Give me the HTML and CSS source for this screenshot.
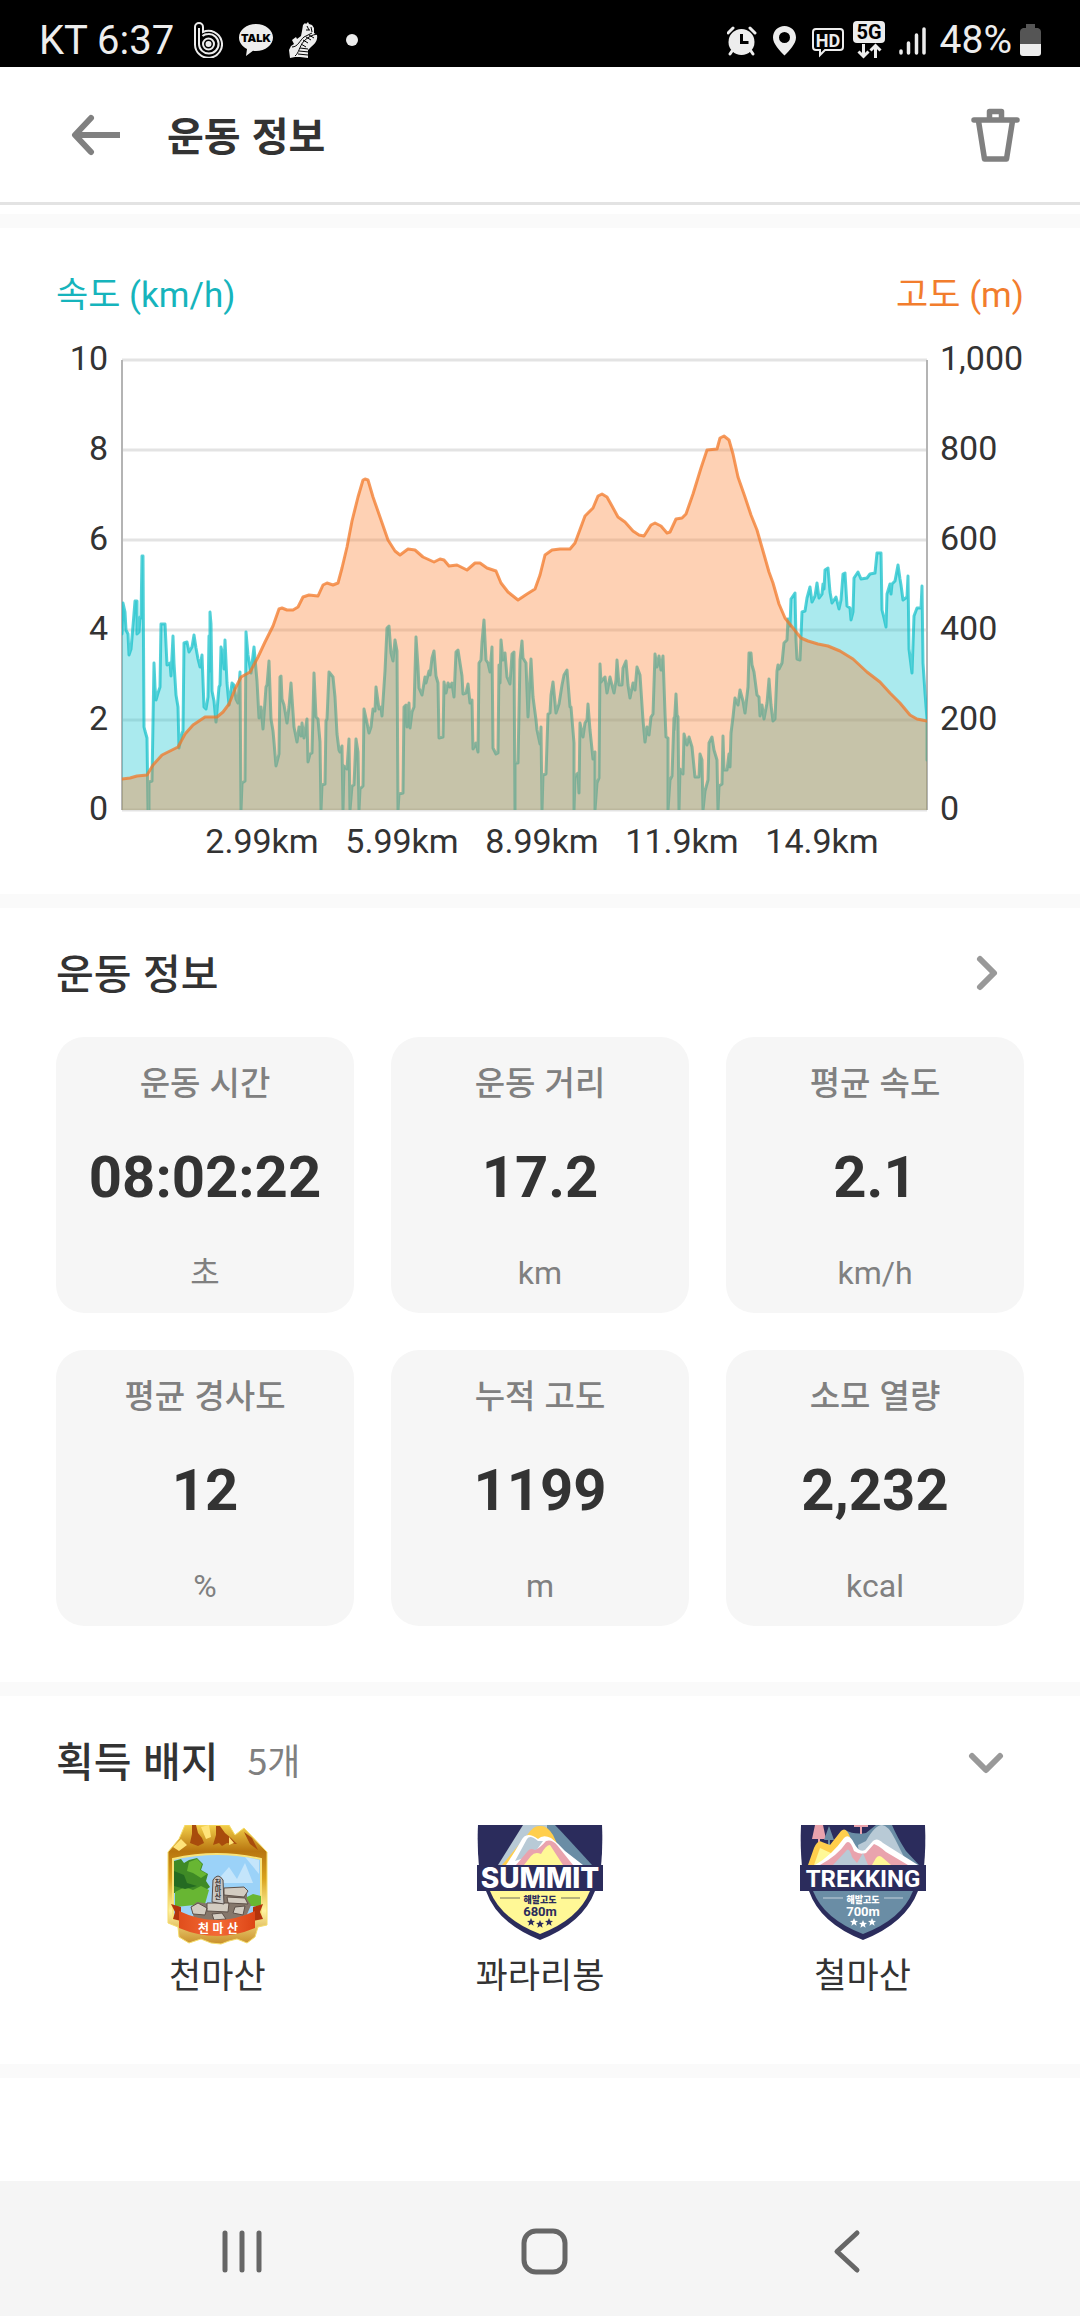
FILE: index.html
```html
<!DOCTYPE html>
<html lang="ko">
<head>
<meta charset="utf-8">
<meta name="viewport" content="width=device-width, initial-scale=1">
<title>운동 정보</title>
<link rel="stylesheet" href="styles.css">
</head>
<body>
<div class="status-bar">
  <div class="status-left">
    <span class="clock">KT 6:37</span>
    <svg width="29" height="36" viewBox="0 0 29 36" fill="none" stroke="#ededed" stroke-width="2">
      <path d="M1 22V5a4 4 0 0 1 8 0v5a13.500 13.500 0 1 1-8 12z"/>
      <path d="M5 22V6M5 22a9.800 9.800 0 1 0 9.500-10c-4 0-6 2-6 2"/>
      <circle cx="14.500" cy="22" r="5.500"/><circle cx="14.500" cy="22" r="2" fill="#ededed"/>
    </svg>
    <svg width="34" height="36" viewBox="0 0 34 36">
      <path fill="#ededed" d="M17 2c9.400 0 17 6 17 13.500S26.400 29 17 29c-1 0-2 0-3-.2L7 34l1-7C3 24.500 0 20.300 0 15.500 0 8 7.600 2 17 2z"/>
      <text class="talk-text" x="17" y="20">TALK</text>
    </svg>
    <svg width="29" height="36" viewBox="0 0 29 36">
      <path fill="#ededed" d="M14 3l2-2 1 1 2-2 1 2 3 1 2 3v5l3 2c1 5-2 9-6 12l-3 3v8l-8-1-5 0-5 1-1-8 2-4 3-2-2-4 4-3 1 2 4-3 1-5z"/>
      <path fill="none" stroke="#000" d="M6 34c4-3 4-9 9-15 4-4 8-6 13-7M3 25c6 0 8-7 12-10l8-4M18 4l2 4M22 5l1 5M17 8h4M14 18l5 3M17 15l5 3M20 13l5 3M12 22l5 3M11 26l8 1M10 29l10 1M9 32l10 1"/>
    </svg>
    <i class="more-dot"></i>
  </div>
  <div class="status-right">
    <svg width="37" height="36" viewBox="0 0 37 36">
      <circle cx="14.500" cy="20" r="13" fill="#ededed"/>
      <path d="M1 11l5-5M28 11l-5-5M5 29l-2 3M24 29l2 3" stroke="#ededed" stroke-width="3" stroke-linecap="round"/>
      <path d="M14.500 12v8.500h7" fill="none" stroke="#000" stroke-width="3"/>
    </svg>
    <svg width="32" height="36" viewBox="0 0 32 36">
      <path fill="#ededed" fill-rule="evenodd" d="M12.500 4C19 4 24 9 24 15.500 24 22 17 29 12.500 33.500 8 29 1 22 1 15.500 1 9 6 4 12.500 4zm0 6a5.500 5.500 0 1 0 0 11 5.500 5.500 0 0 0 0-11z"/>
    </svg>
    <svg width="33" height="36" viewBox="0 0 33 36">
      <path fill="none" stroke="#ededed" stroke-width="2" d="M4 7h24a3 3 0 0 1 3 3v15a3 3 0 0 1-3 3H13l-5 5v-5H4a3 3 0 0 1-3-3V10a3 3 0 0 1 3-3z"/>
      <text class="hd-text" x="16" y="25">HD</text>
    </svg>
    <svg width="33" height="38" viewBox="0 0 33 38">
      <rect y="0" width="32" height="22" rx="4" fill="#ededed"/>
      <text class="net-text" x="16" y="18">5G</text>
      <path fill="none" stroke="#ededed" stroke-width="3" d="M10.500 23v12M5.500 30.500l5 5 5-5M22.500 37V24M17.500 29.500l5-5 5 5"/>
    </svg>
    <svg width="38" height="36" viewBox="0 0 38 36">
      <path stroke="#ededed" stroke-width="3.500" stroke-linecap="round" d="M7 29v2M14.500 21v10M22.500 13v18M30 7v24"/>
    </svg>
    <span>48%</span>
    <svg width="21" height="34" viewBox="0 0 21 34">
      <path fill="#555" d="M6 1h9v4h3q3 1 3 4v13H0V9q0-3 3-4h3z"/>
      <path fill="#ededed" d="M0 21h21v9q0 3-3 3H3q-3 0-3-3z"/>
    </svg>
  </div>
</div>

<header class="app-header">
  <button class="icon-button" aria-label="뒤로">
    <svg width="51" height="42" viewBox="0 0 51 42" fill="none" stroke="#808080" stroke-width="6"><path d="M50 21H5"/><path d="M21 4L5 21l16 17" stroke-linecap="round" stroke-linejoin="round"/></svg>
  </button>
  <h1>운동 정보</h1>
  <button class="icon-button" aria-label="삭제">
    <svg width="49" height="54" viewBox="0 0 49 54" fill="none" stroke="#808080" stroke-width="5.500" stroke-linejoin="round" stroke-linecap="round"><path d="M3 12h43M18.500 11V3.500h12V11M7.500 13l6 38h22l6-38"/></svg>
  </button>
</header>

<main>
  <section class="panel chart-panel">
    <div class="legend"><span class="speed">속도 (km/h)</span><span class="altitude">고도 (m)</span></div>
    <div class="chart">
      <div class="axis axis-left"><span>10</span><span>8</span><span>6</span><span>4</span><span>2</span><span>0</span></div>
      <div class="plot">
        <svg viewBox="0 0 805 450" preserveAspectRatio="none" role="img" aria-label="속도와 고도">
          <path class="grid-line" d="M0 0H805M0 90H805M0 180H805M0 270H805M0 360H805M0 450H805"/>
          <path class="side-line" d="M0 0V450M805 0V450"/>
          <clipPath id="plot-area"><rect width="805" height="450"/></clipPath>
          <!-- both areas close outside the plot, so the clip hides their closing edges -->
          <g clip-path="url(#plot-area)">
            <path class="speed-area" d="M-5 274L0 274 1 243 3 252 4 270 6 274 7 295 9 289 11 266 13 241 15 241 15 274 17 272 18 257 19 258 20 196 21 196 22 367 23 371 25 378 26 450 27 450 27 422 30 421 32 303 33 327 34 340 36 333 38 327 39 264 43 264 45 305 48 303 49 316 51 276 52 303 54 335 56 347 57 388 60 373 61 371 62 283 65 282 67 292 70 287 72 275 74 288 76 299 78 307 80 295 82 347 84 349 86 337 87 276 88 311 88 252 89 264 90 331 92 341 94 362 97 327 98 325 99 287 101 295 102 309 103 280 105 323 107 345 110 323 112 325 114 339 116 343 118 312 119 450 120 423 123 421 124 272 126 295 129 313 132 287 135 321 137 358 139 347 141 369 144 327 145 325 147 301 149 359 151 371 152 382 154 406 157 394 158 317 159 316 160 339 162 345 165 363 167 347 169 323 172 367 175 382 177 367 179 376 180 363 182 378 185 359 186 402 188 394 190 393 192 313 194 357 196 359 198 382 199 450 200 425 203 424 204 361 205 359 207 312 211 317 213 337 215 374 217 390 218 392 220 386 221 450 222 406 225 409 227 379 228 450 230 426 232 425 234 379 236 392 237 450 238 429 241 426 242 349 245 363 247 373 249 367 251 349 253 351 254 327 257 349 259 347 260 356 263 311 265 268 267 266 269 293 271 301 273 280 275 291 276 450 277 434 281 433 282 347 284 345 285 367 287 343 288 368 290 352 292 347 294 277 296 307 297 328 300 335 303 317 304 323 307 311 308 315 310 298 312 291 314 316 316 323 317 378 321 377 322 322 324 333 326 323 328 327 330 323 332 337 334 292 336 290 338 303 340 316 341 334 344 333 346 324 348 343 350 340 351 389 354 383 356 392 357 303 359 300 360 282 362 260 364 300 366 303 368 312 370 287 371 388 374 394 376 393 377 305 378 323 379 280 381 300 383 293 385 317 388 324 390 294 392 292 393 450 393 403 396 403 398 300 400 281 401 298 404 303 406 357 409 299 411 337 414 360 415 370 418 384 419 367 420 450 421 415 424 414 426 354 428 353 429 335 431 322 434 353 437 344 440 325 442 315 445 310 448 347 449 347 452 383 452 450 453 417 456 413 457 433 458 363 461 377 463 363 465 360 466 344 468 370 471 399 473 392 473 450 475 423 477 418 478 304 479 322 483 317 485 333 488 317 492 333 494 320 495 300 497 325 500 325 501 308 504 301 506 325 508 338 511 323 513 330 515 307 518 315 521 360 523 382 525 367 527 375 529 357 531 354 533 294 535 307 537 296 539 310 541 296 543 353 544 377 546 378 546 450 548 420 550 416 552 358 552 370 554 334 555 355 556 357 557 450 558 409 561 414 562 374 565 385 567 377 570 387 573 417 577 417 578 394 580 400 581 450 583 431 586 420 587 383 590 377 592 390 595 400 596 450 597 426 600 424 601 376 602 410 605 410 607 394 608 407 609 373 611 357 613 338 616 345 618 330 621 341 623 353 626 327 627 293 629 293 630 305 632 312 635 335 637 337 638 356 640 345 642 359 645 343 647 319 649 345 651 361 653 359 655 311 656 305 657 309 660 303 662 283 665 280 666 259 668 266 669 239 673 233 674 280 675 299 678 300 680 252 683 251 685 238 688 227 690 242 693 236 695 223 697 238 700 234 701 224 702 229 703 210 706 208 708 232 710 243 714 237 717 249 719 240 721 214 723 213 725 246 728 248 729 260 731 252 732 218 736 212 739 219 745 218 748 214 753 213 755 193 759 193 760 250 762 258 764 267 765 234 768 224 769 234 770 224 773 221 776 205 778 219 779 225 781 240 785 237 786 216 787 289 790 313 792 256 795 248 799 248 800 226 801 303 803 333 805 359 805 400 812 400 812 460 -5 460z"/>
            <path class="altitude-area" d="M-5 419L0 419 8 418 15 416 25 415 31 405 40 395 50 390 56 387 63 374 71 365 83 357 95 357 101 352 107 344 113 329 119 317 128 312 136 297 143 282 151 266 157 249 160 248 165 250 171 250 176 247 181 237 187 235 196 236 201 225 205 223 211 225 216 223 220 208 225 187 230 161 236 137 241 120 243 119 246 120 251 137 258 157 266 180 273 191 278 195 286 189 293 190 301 197 312 202 318 199 322 200 327 206 335 205 345 210 353 203 358 203 365 208 374 211 379 223 386 232 391 236 396 240 405 234 413 229 418 215 423 195 430 190 438 189 448 189 453 183 463 156 471 148 476 136 480 134 485 137 490 146 496 157 503 162 511 171 517 175 522 176 529 165 533 163 539 166 545 173 548 172 554 159 560 158 564 154 571 134 579 108 585 90 595 89 598 78 602 76 607 80 611 94 616 117 623 137 629 155 635 170 641 191 647 212 651 223 657 244 663 258 671 268 679 278 686 281 696 284 706 286 718 291 731 299 745 312 758 322 768 333 778 343 788 355 795 359 805 361 812 362 812 460 -5 460z"/>
          </g>
        </svg>
        <div class="axis-bottom"><span>2.99km</span><span>5.99km</span><span>8.99km</span><span>11.9km</span><span>14.9km</span></div>
      </div>
      <div class="axis axis-right"><span>1,000</span><span>800</span><span>600</span><span>400</span><span>200</span><span>0</span></div>
    </div>
  </section>

  <section class="panel stats-panel">
    <div class="panel-head">
      <h2>운동 정보</h2>
      <button class="icon-button toggle" aria-label="자세히">
        <svg width="40" height="40" viewBox="0 0 40 40" fill="none" stroke="#999" stroke-width="6" stroke-linecap="round" stroke-linejoin="round"><path d="M12 6l14 14-14 14"/></svg>
      </button>
    </div>
    <dl class="cards">
      <div class="card"><dt>운동 시간</dt><dd class="value">08:02:22</dd><dd class="unit">초</dd></div>
      <div class="card"><dt>운동 거리</dt><dd class="value">17.2</dd><dd class="unit">km</dd></div>
      <div class="card"><dt>평균 속도</dt><dd class="value">2.1</dd><dd class="unit">km/h</dd></div>
      <div class="card"><dt>평균 경사도</dt><dd class="value">12</dd><dd class="unit">%</dd></div>
      <div class="card"><dt>누적 고도</dt><dd class="value">1199</dd><dd class="unit">m</dd></div>
      <div class="card"><dt>소모 열량</dt><dd class="value">2,232</dd><dd class="unit">kcal</dd></div>
    </dl>
  </section>

  <section class="panel badge-panel">
    <div class="panel-head">
      <h2>획득 배지</h2><span class="count">5개</span>
      <button class="icon-button toggle" aria-label="펼치기">
        <svg width="40" height="40" viewBox="0 0 40 40" fill="none" stroke="#999" stroke-width="6" stroke-linecap="round" stroke-linejoin="round"><path d="M4 15l14 14 14-14"/></svg>
      </button>
    </div>
    <ul class="badges">
      <li>
        <svg width="101" height="120" viewBox="0 0 101 120">
          <defs>
            <linearGradient id="gold" x1="0" y1="0" x2="0" y2="1"><stop offset="0" stop-color="#f3cf4a"/><stop offset=".22" stop-color="#b8750f"/><stop offset=".45" stop-color="#d9a21c"/><stop offset=".72" stop-color="#fff3a0"/><stop offset="1" stop-color="#c98f2a"/></linearGradient>
            <linearGradient id="ribbon" x1="0" y1="0" x2="1" y2="0"><stop offset="0" stop-color="#e04e1c"/><stop offset=".5" stop-color="#f46a35"/><stop offset="1" stop-color="#dd4516"/></linearGradient>
          </defs>
          <path fill="url(#gold)" stroke="#f5dd6c" d="M18 0H62L68 10 77 3 100 27V100L91 102 88 112 80 118 70 114 62 116 54 119 44 118 34 114 22 118 12 112 11 102 1 98V27L12 14z"/>
          <path fill="#a84c0c" d="M25 0h4l2 8 4 5 2 5-6 3-8-3 2-9zM49 1h4l5 7 6 5 6 6-10-1-5 3-3-3-6 2 3-10zM77 7l8 6 6 12-8-6z"/>
          <path fill="#ffe47a" d="M34 2l8-2 2 12-5 2zM62 12l5 6-5 2zM6 22l8-8 6 6-8 6z"/>
          <path fill="#9bd2f8" stroke="#f8e37a" stroke-width="2" d="M6 34Q50 24 94 34V94H6z"/>
          <path fill="#c4e5fb" d="M48 58l14-16 8 12 8-16 8 20zM78 32l14 3v14z"/>
          <path fill="#3f8a26" d="M7 36l7-2 3 4 5-3 8-2 6 6-2 6 7 4-2 7 4 6-8 6H7z"/>
          <path fill="#68b633" d="M22 37l8-3 5 5-2 6 7 4-6 4-8-5-6-2zM8 67l10-5 8 3 8-4 8 4-4 14-30 3zM76 74l10-5 8 2v10H76z"/>
          <path fill="#246b22" d="M7 46l10 4 3 8 10 3-12 3-11-3z"/>
          <path fill="#85776b" d="M24 82l6-5 14 2 18-13 18 0 0 8 4 6-6 14-22 7-28-4z"/>
          <path fill="#d3ccc1" stroke="#5e5149" d="M24 82l7-4 9 5-2 7-12-1zM57 63l20-1 4 4-4 6-20-2zM60 72l18 1 3 6-20-1zM40 78l22 0-1 9-21-1zM68 82l10-1-2 9-10-2zM45 89l10-1 4 6-12 1z"/>
          <path fill="#c9c7c4" stroke="#554c48" d="M45 77l1-22q5-8 10 0l1 24z"/>
          <text class="stone-text" x="51" y="60">천</text><text class="stone-text" x="51" y="67">마</text><text class="stone-text" x="51" y="74">산</text>
          <path fill="#b3340c" d="M4 79l10 3v14L6 94l2-7zM96 79l-10 3v14l10-2-3-7z"/>
          <path fill="url(#ribbon)" d="M12 86Q50 104 88 86V103Q50 119 12 103z"/>
          <text class="ribbon-text" x="51" y="108">천 마 산</text>
        </svg>
        <span>천마산</span>
      </li>
      <li>
        <svg width="126" height="120" viewBox="0 0 126 120">
          <path fill="#2b2c5c" d="M1 0H125Q126 20 124 42H2Q0 20 1 0z"/>
          <path fill="#6a8da5" d="M60 0H78Q84 6 115 40H60z"/>
          <path fill="#b8cad6" d="M46 0H70V40H21z"/>
          <path fill="#ffce4c" d="M25 40L51 9Q57 0 63 1 70 0 76 10L90 40z"/>
          <path fill="#fff" d="M29 40Q36 30 44 16 49 5 61 14 66 9 74 13 82 19 88 26L106 40z"/>
          <path fill="#b8cad6" d="M38 36L50 14Q53 9 61 16L66 16 56 30z"/>
          <path fill="#e9a3ad" d="M39 40L50 27Q53 22 58 25 63 23 69 16 75 14 80 20L96 40z"/>
          <path fill="#fff896" d="M47 40L54 31Q58 26 64 29 69 20 73 20L86 40z"/>
          <path fill="#2b2c5c" d="M0 40H126V66H118Q106 98 63 115 20 98 9 66H0z"/>
          <path fill="#fff896" d="M13 66H113Q102 94 63 109 24 94 13 66z"/>
          <text class="summit-text" x="63" y="63">SUMMIT</text>
          <path stroke="#6e6c5c" d="M23 73H43M84 73H103"/>
          <text class="small-text navy" x="63" y="78">해발고도</text>
          <text class="height-text navy" x="63" y="91">680m</text>
          <g fill="#2b2c5c"><path id="star" d="M63 95l1.200 2.700 2.800.2-2.200 1.900.8 2.900-2.600-1.600-2.600 1.600.8-2.900-2.200-1.900 2.800-.2z"/><use href="#star" x="-9" y="-2"/><use href="#star" x="9" y="-2"/></g>
        </svg>
        <span>꽈라리봉</span>
      </li>
      <li>
        <svg width="126" height="120" viewBox="0 0 126 120">
          <path fill="#2b2c5c" d="M1 0H125Q126 20 124 42H2Q0 20 1 0z"/>
          <path fill="#e9a3ad" d="M15 0h8l3 14h-6v5h-2v-5h-6zM54 0h14v2h-6v7h-2V2h-6z"/>
          <path fill="#6a8da5" d="M29 1l5 14h-4v5h-2v-5h-4zM45 5Q54 10 66 8L76 0H92Q97 12 106 26L119 40H50z"/>
          <path fill="#e9a3ad" d="M54 0h14v2h-6v7h-2V2h-6z"/>
          <path fill="#b8cad6" d="M58 20L66 16Q75 0 82 0 88 0 95 14L108 40H60z"/>
          <path fill="#ffce4c" d="M8 40L14 23Q18 14 22 17L30 20 41 6Q46 1 50 12L56 40z"/>
          <path fill="#fff896" d="M14 40l6-17 13 6-9 11z"/>
          <path fill="#fff" d="M15 40Q32 30 44 13 49 8 54 18 59 28 65 25L73 16Q77 12 83 18L118 40z"/>
          <path fill="#e9a3ad" d="M20 40Q38 30 46 18 50 14 54 26 60 30 66 28L74 19Q78 20 86 27L108 40z"/>
          <path fill="#b8cad6" d="M33 40L46 26Q49 21 52 32L57 38 63 28 68 40z"/>
          <path fill="#fff896" d="M72 40l4-7q3-4 7 0l8 7z"/>
          <path fill="#2b2c5c" d="M0 40H126V66H118Q106 98 63 115 20 98 9 66H0z"/>
          <path fill="#6a8da5" d="M13 66H113Q102 94 63 109 24 94 13 66z"/>
          <text class="trekking-text" x="63" y="62">TREKKING</text>
          <path stroke="#c3d0da" d="M23 73H43M84 73H103"/>
          <text class="small-text white" x="63" y="78">해발고도</text>
          <text class="height-text white" x="63" y="91">700m</text>
          <g fill="#fff"><use href="#star"/><use href="#star" x="-9" y="-2"/><use href="#star" x="9" y="-2"/></g>
        </svg>
        <span>철마산</span>
      </li>
    </ul>
  </section>
  <div class="divider"></div>
</main>

<nav class="system-nav">
  <button class="icon-button" aria-label="최근 앱"><svg width="46" height="48" viewBox="0 0 46 48"><path stroke="#666" stroke-width="5" stroke-linecap="round" d="M6 6v37M23 6v37M40 6v37"/></svg></button>
  <button class="icon-button" aria-label="홈"><svg width="48" height="48" viewBox="0 0 48 48"><rect x="4" y="4" width="41" height="41" rx="12" fill="none" stroke="#666" stroke-width="5"/></svg></button>
  <button class="icon-button" aria-label="이전"><svg width="48" height="48" viewBox="0 0 48 48"><path fill="none" stroke="#666" stroke-width="5" stroke-linecap="round" stroke-linejoin="round" d="M34 6L14 24.500 34 43"/></svg></button>
</nav>
</body>
</html>
```
FILE: styles.css
```css
* { box-sizing: border-box; }

body {
  margin: 0;
  min-height: 100vh;
  display: flex;
  flex-direction: column;
  background: #fff;
  color: #333;
  font-family: Roboto, "Noto Sans CJK KR", sans-serif;
}

h1, h2, dl, dd, ul { margin: 0; padding: 0; }
svg { display: block; flex: none; }

.icon-button {
  display: flex;
  align-items: center;
  justify-content: center;
  padding: 0;
  border: 0;
  background: none;
}

/* Status bar */
.status-bar {
  display: flex;
  justify-content: space-between;
  height: 67px;
  padding: 13px 39px 0 39px;
  background: #000;
  color: #ededed;
  font-size: 39px;
}
.status-left, .status-right { display: flex; align-items: center; }
.status-left { gap: 16px; }
.status-right { gap: 8px; }
.clock { margin-right: 4px; font-size: 40px; }
.more-dot { width: 12px; height: 12px; margin-left: 12px; border-radius: 50%; background: #ededed; }
.talk-text { font: 900 11px Inter, sans-serif; text-anchor: middle; }
.hd-text { font: 700 18px Roboto, sans-serif; text-anchor: middle; fill: #ededed; }
.net-text { font: 700 20px Roboto, sans-serif; text-anchor: middle; }

/* Header */
.app-header {
  display: flex;
  align-items: center;
  height: 138px;
  padding: 0 60px 0 70px;
  border-bottom: 3px solid #e3e3e3;
}
.app-header h1 {
  flex: 1;
  margin-left: 46px;
  padding-bottom: 2px;
  font: 700 40px/60px "Noto Sans CJK KR", sans-serif;
}

main { flex: 1; padding-top: 9px; }
.panel { padding: 37px 56px 0; border-top: 14px solid #fafafa; }
.divider { height: 14px; background: #fafafa; }

/* Chart */
.chart-panel { padding-top: 44px; padding-bottom: 33px; }
.legend { display: flex; justify-content: space-between; font-size: 35px; line-height: 48px; }
.speed { color: #16b4bc; }
.altitude { color: #f27d2d; }
.chart {
  display: grid;
  grid-template-columns: 66px 1fr 97px;
  margin-top: 18px;
  font-size: 34px;
  line-height: 40px;
}
.axis { display: flex; flex-direction: column; justify-content: space-between; height: 490px; }
.axis-left { padding-right: 14px; text-align: right; }
.axis-right { padding-left: 13px; }
.plot { padding-top: 22px; }
.plot svg { width: 100%; height: 450px; overflow: visible; }
.axis-bottom {
  display: grid;
  grid-template-columns: repeat(5, 1fr);
  margin-top: 11px;
  padding: 0 35px 0 70px;
  text-align: center;
}
.grid-line { stroke: #e3e3e3; stroke-width: 3; }
.side-line { stroke: #b4b4b4; stroke-width: 2; }
.speed-area, .altitude-area { stroke-width: 3; stroke-linejoin: round; }
.speed-area { fill: rgba(12, 195, 206, .35); stroke: rgba(12, 190, 200, .7); }
.altitude-area { fill: rgba(252, 123, 40, .35); stroke: rgba(242, 120, 40, .75); }

/* Section heads */
.panel-head { display: flex; align-items: center; height: 56px; }
.panel-head h2 { padding-bottom: 5px; font: 500 41px/56px "Noto Sans CJK KR", sans-serif; }
.count { margin-left: 29px; padding-bottom: 4px; color: #808080; font: 400 36px/56px "Noto Sans CJK KR", sans-serif; }
.toggle { width: 72px; height: 56px; margin-left: auto; }

/* Stat cards */
.stats-panel { padding-bottom: 56px; }
.cards { display: grid; grid-template-columns: repeat(3, 1fr); gap: 37px; margin-top: 36px; }
.card {
  padding: 22px 0 18px;
  border-radius: 28px;
  background: #f6f6f6;
  color: #808080;
  text-align: center;
}
.card dt { font: 500 33px/44px "Noto Sans CJK KR", sans-serif; }
.card .value { margin-top: 38px; color: #333; font: 700 58px/72px Roboto, sans-serif; }
.card .unit { margin-top: 38px; font: 400 32px/44px Roboto, "Noto Sans CJK KR", sans-serif; }

/* Badges */
.badge-panel { padding-bottom: 69px; }
.badges { display: grid; grid-template-columns: repeat(3, 1fr); margin-top: 36px; list-style: none; }
.badges li { display: flex; flex-direction: column; align-items: center; gap: 6px; }
.badges span { font: 400 35px/44px "Noto Sans CJK KR", sans-serif; }
.badges text { text-anchor: middle; }
.stone-text { font: 700 7px "Noto Sans CJK KR", sans-serif; fill: #443c3a; }
.ribbon-text { font: 700 12px "Noto Sans CJK KR", sans-serif; fill: #fff; }
.summit-text { font: 800 28px Inter, sans-serif; fill: #fff; }
.trekking-text { font: 700 24px Roboto, sans-serif; fill: #fff; }
.small-text { font: 900 9px "Noto Sans CJK KR", sans-serif; }
.height-text { font: 700 13px Roboto, sans-serif; }
.navy { fill: #2b2c5c; }
.white { fill: #fff; }

/* System navigation */
.system-nav {
  display: grid;
  grid-template-columns: repeat(3, 1fr);
  height: 135px;
  padding: 5px 82px 0 91px;
  background: #f5f5f5;
}
```
